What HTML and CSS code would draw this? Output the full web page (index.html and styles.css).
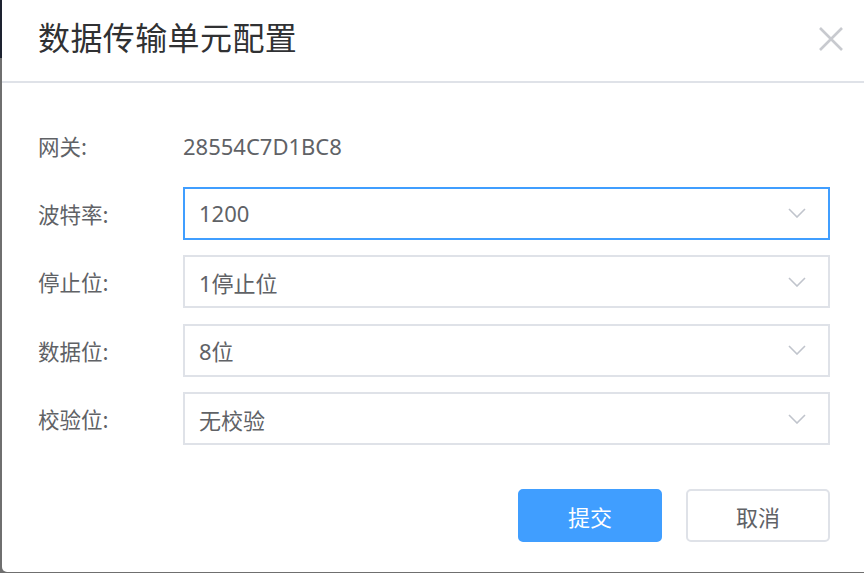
FILE: index.html
```html
<!DOCTYPE html>
<html lang="zh-CN">
<head>
<meta charset="utf-8">
<title>数据传输单元配置</title>
<link rel="stylesheet" href="styles.css">
</head>
<body>
<div class="dialog">
  <div class="dialog-header">
    <span class="dialog-title">数据传输单元配置</span>
    <button class="dialog-close" aria-label="关闭">
      <svg width="26" height="26" viewBox="0 0 26 26"><path d="M2 2 L24 24 M24 2 L2 24" stroke="#c8cacf" stroke-width="2.6" fill="none"/></svg>
    </button>
  </div>
  <div class="dialog-body">
    <div class="form-row info-row">
      <label class="form-label">网关:</label>
      <span class="form-value">28554C7D1BC8</span>
    </div>
    <div class="form-row">
      <label class="form-label">波特率:</label>
      <div class="select is-focus"><span>1200</span><svg class="chev" width="18" height="10" viewBox="0 0 18 10"><path d="M1 1 L9 9 L17 1" stroke="#c0c4cc" stroke-width="1.6" fill="none"/></svg></div>
    </div>
    <div class="form-row">
      <label class="form-label">停止位:</label>
      <div class="select"><span>1停止位</span><svg class="chev" width="18" height="10" viewBox="0 0 18 10"><path d="M1 1 L9 9 L17 1" stroke="#c0c4cc" stroke-width="1.6" fill="none"/></svg></div>
    </div>
    <div class="form-row">
      <label class="form-label">数据位:</label>
      <div class="select"><span>8位</span><svg class="chev" width="18" height="10" viewBox="0 0 18 10"><path d="M1 1 L9 9 L17 1" stroke="#c0c4cc" stroke-width="1.6" fill="none"/></svg></div>
    </div>
    <div class="form-row">
      <label class="form-label">校验位:</label>
      <div class="select"><span>无校验</span><svg class="chev" width="18" height="10" viewBox="0 0 18 10"><path d="M1 1 L9 9 L17 1" stroke="#c0c4cc" stroke-width="1.6" fill="none"/></svg></div>
    </div>
  </div>
  <div class="dialog-footer">
    <button class="btn btn-primary">提交</button>
    <button class="btn btn-default">取消</button>
  </div>
</div>
</body>
</html>
```

FILE: styles.css
```css
html, body {
  margin: 0;
  padding: 0;
  width: 864px;
  height: 573px;
  overflow: hidden;
}
body {
  background: linear-gradient(to bottom, #1d2230 0, #1d2230 58px, #6f6f6f 58px, #6f6f6f 100%);
  font-family: "Noto Sans", "Noto Sans CJK SC", sans-serif;
  color: #606266;
}
.dialog {
  margin-left: 2px;
  width: 872px;
  height: 572px;
  background: #fff;
  border-radius: 0 0 5px 5px;
  display: flex;
  flex-direction: column;
}
.dialog-header {
  height: 83px;
  box-sizing: border-box;
  border-bottom: 2px solid #dfe2e8;
  display: flex;
  align-items: center;
  padding: 0 0 10px 36px;
  position: relative;
}
.dialog-title {
  font-family: "Noto Sans CJK SC", sans-serif;
  font-size: 32px;
  line-height: 1;
  color: #303133;
  letter-spacing: 0.4px;
}
.dialog-close {
  position: absolute;
  left: 816px;
  top: 26px;
  width: 26px;
  height: 26px;
  padding: 0;
  border: 0;
  background: none;
  display: flex;
}
.dialog-body {
  padding: 36px 0 0 36px;
  display: flex;
  flex-direction: column;
  gap: 15.5px;
}
.form-row {
  display: flex;
  align-items: center;
  height: 53px;
}
.info-row {
  height: 53px;
  margin-bottom: -1px;
}
.form-label {
  width: 145px;
  flex: none;
  font-family: "Noto Sans CJK SC", sans-serif;
  font-size: 21.5px;
  color: #606266;
}
.form-value {
  font-size: 22px;
  color: #606266;
}
.select {
  width: 647px;
  height: 53px;
  box-sizing: border-box;
  border: 2px solid #dfe2e8;
  display: flex;
  align-items: center;
  justify-content: space-between;
  padding: 0 22px 0 14px;
  font-size: 22px;
  color: #606266;
}
.select.is-focus {
  border-color: #409eff;
}
.chev {
  display: block;
}
.dialog-footer {
  display: flex;
  gap: 24px;
  padding: 44px 0 0 516px;
}
.btn {
  width: 144px;
  height: 53px;
  box-sizing: border-box;
  border-radius: 5px;
  font-family: "Noto Sans CJK SC", sans-serif;
  font-size: 22px;
  padding: 0;
  display: flex;
  align-items: center;
  justify-content: center;
}
.btn-primary {
  background: #409eff;
  border: 2px solid #409eff;
  color: #fff;
}
.btn-default {
  background: #fff;
  border: 2px solid #dfe2e8;
  color: #606266;
}
```
